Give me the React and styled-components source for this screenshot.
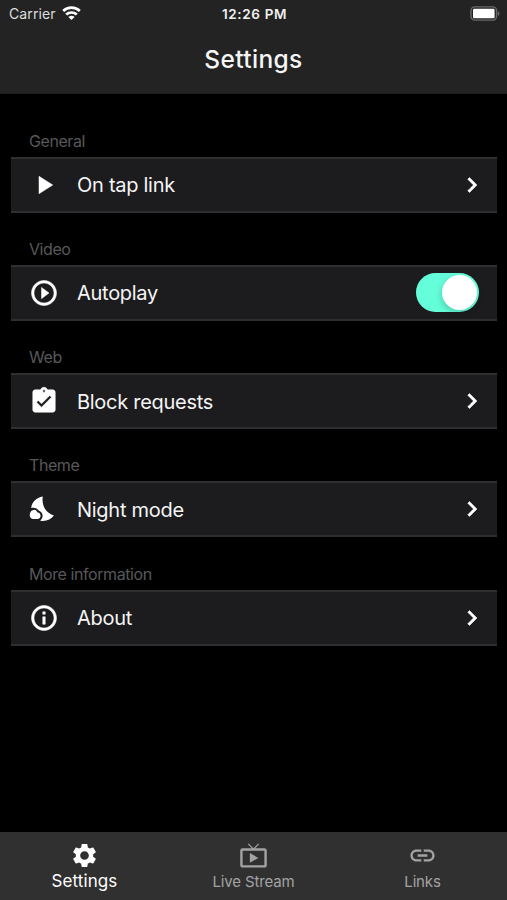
import React from "react";
import styled, { createGlobalStyle } from "styled-components";
import {
  MdPlayArrow,
  MdPlayCircleOutline,
  MdAssignmentTurnedIn,
  MdInfoOutline,
  MdChevronRight,
  MdSettings,
  MdLiveTv,
  MdLink,
} from "react-icons/md";

const GlobalStyle = createGlobalStyle`
  * { box-sizing: border-box; }
  body {
    margin: 0;
    background: #000000;
    font-family: Inter, "Liberation Sans", sans-serif;
  }
  svg { display: block; flex-shrink: 0; }
`;

const Screen = styled.div`
  height: 900px;
  display: flex;
  flex-direction: column;
  background: #000000;
  color: #FFFFFF;
  overflow: hidden;
`;

const Header = styled.header`
  height: 94px;
  background: #232323;
  border-bottom: 1px solid #1C1C1C;
`;

const StatusBar = styled.div`
  height: 27px;
  padding: 0 7px 0 9px;
  display: grid;
  grid-template-columns: 1fr auto 1fr;
  align-items: center;
`;

const Carrier = styled.div`
  display: flex;
  align-items: center;
  gap: 6px;
  font-size: 14px;
  line-height: 27px;
  letter-spacing: 0.1px;
  color: #DEDEDE;
`;

const Clock = styled.div`
  font-size: 13.5px;
  font-weight: 600;
  letter-spacing: 0.65px;
  color: #F0F0F0;
`;

const BatteryIcon = styled.svg`
  justify-self: end;
`;

const Title = styled.h1`
  margin: 0;
  font-size: 24.5px;
  font-weight: 500;
  line-height: 65px;
  letter-spacing: 0.35px;
  text-align: center;
  color: #F5F5F5;
`;

const Content = styled.main`
  flex: 1;
  padding: 31.8px 10px 0 11px;
`;

const Group = styled.section`
  height: 108.2px;
`;

const GroupLabel = styled.h2`
  margin: 0;
  padding: 0 18px;
  height: 31px;
  font-size: 16px;
  font-weight: 400;
  line-height: 30px;
  letter-spacing: -0.42px;
  color: #58585A;
`;

const Row = styled.div`
  height: 56px;
  padding: 0 18px;
  display: flex;
  align-items: center;
  background: #1C1C1E;
  border-top: 2px solid #2F2F31;
  border-bottom: 2px solid #2F2F31;

  /* thickens the glyphs, skipping the invisible bounds path */
  path:not([fill="none"]) { stroke-width: 0.4px; }
  path[fill="none"] { stroke: none; }
`;

const RowLabel = styled.span`
  flex: 1;
  margin-left: 18px;
  padding-top: 1px;
  font-size: 20px;
  line-height: 28px;
  letter-spacing: -0.28px;
  color: #F5F5F5;
`;

const Chevron = styled(MdChevronRight)`
  margin-right: -8px;
`;

const Toggle = styled.div`
  width: 63px;
  height: 39px;
  padding: 2px;
  display: flex;
  justify-content: flex-end;
  border-radius: 20px;
  background: #64FFDA;
`;

const Knob = styled.div`
  width: 35px;
  height: 35px;
  border-radius: 50%;
  background: #FFFFFF;
  box-shadow: -1px 3px 7px rgba(0, 0, 0, 0.18);
`;

const TabBar = styled.nav`
  height: 68px;
  display: grid;
  grid-template-columns: repeat(3, 1fr);
  background: #303030;
`;

const Tab = styled.div`
  padding-top: 9px;
  display: flex;
  flex-direction: column;
  align-items: center;
  color: ${(p) => (p.$active ? "#FFFFFF" : "#A3A3A3")};

  path[fill="none"] { stroke: none; }
`;

const TabLabel = styled.span`
  font-size: ${(p) => (p.$active ? 17 : 15)}px;
  line-height: ${(p) => (p.$active ? 22 : 24)}px;
  letter-spacing: ${(p) => (p.$active ? 0.1 : -0.15)}px;
`;

function NightIcon({ size }) {
  return (
    <svg width={size} height={size} viewBox="1 0 30 30" fill="currentColor">
      <path d="M14.8 2.6C13.4 11.2 17.6 19 25.9 21.6C23 25.6 18.2 27.8 12.4 26.9C12.7 25.8 14.4 24.6 14.6 22.2C14.8 18.6 12.4 17.8 10.8 16.6C8.8 14 6.2 13.2 3.2 14.1C3.8 8.2 8.4 3.6 14.8 2.6Z" />
      <path d="M5.4 25C0.8 25 0.7 18.6 4 16.6C6.8 14.7 8.6 16.4 9.6 18.4C13.6 18.6 13.6 25 9.4 25Z" />
    </svg>
  );
}

function Wifi() {
  return (
    <svg width="19" height="15" viewBox="0 0 19 15" fill="none" stroke="#FFFFFF" strokeWidth="2.7">
      <path d="M1.2 5C5.8 0.6 13.2 0.6 17.8 5" />
      <path d="M4.2 8.6C7.2 5.8 11.8 5.8 14.8 8.6" />
      <path d="M9.5 14L6.4 10.9C8.2 9.3 10.8 9.3 12.6 10.9Z" fill="#FFFFFF" stroke="none" />
    </svg>
  );
}

function Battery() {
  return (
    <BatteryIcon width="30" height="15" viewBox="0 0 30 15">
      <rect x="1" y="0.9" width="25.6" height="13.2" rx="3.8" fill="none" stroke="#6A6A6A" strokeWidth="1.4" />
      <rect x="3" y="2.8" width="21.6" height="9.4" rx="1.2" fill="#FFFFFF" />
      <path d="M27.8 5.2C30 6 30 9 27.8 9.8Z" fill="#6A6A6A" />
    </BatteryIcon>
  );
}

const groups = [
  { title: "General", label: "On tap link", icon: MdPlayArrow },
  { title: "Video", label: "Autoplay", icon: MdPlayCircleOutline, toggle: true },
  { title: "Web", label: "Block requests", icon: MdAssignmentTurnedIn },
  { title: "Theme", label: "Night mode", icon: NightIcon },
  { title: "More information", label: "About", icon: MdInfoOutline },
];

const tabs = [
  { label: "Settings", icon: MdSettings, active: true },
  { label: "Live Stream", icon: MdLiveTv },
  { label: "Links", icon: MdLink },
];

export default function App() {
  return (
    <>
      <GlobalStyle />
      <Screen>
        <Header>
          <StatusBar>
            <Carrier>Carrier <Wifi /></Carrier>
            <Clock>12:26 PM</Clock>
            <Battery />
          </StatusBar>
          <Title>Settings</Title>
        </Header>

        <Content>
          {groups.map(({ title, label, icon: Icon, toggle }) => (
            <Group key={title}>
              <GroupLabel>{title}</GroupLabel>
              <Row>
                <Icon size={30} />
                <RowLabel>{label}</RowLabel>
                {toggle ? <Toggle><Knob /></Toggle> : <Chevron size={30} />}
              </Row>
            </Group>
          ))}
        </Content>

        <TabBar>
          {tabs.map(({ label, icon: Icon, active }) => (
            <Tab key={label} $active={active}>
              <Icon size={29} />
              <TabLabel $active={active}>{label}</TabLabel>
            </Tab>
          ))}
        </TabBar>
      </Screen>
    </>
  );
}
